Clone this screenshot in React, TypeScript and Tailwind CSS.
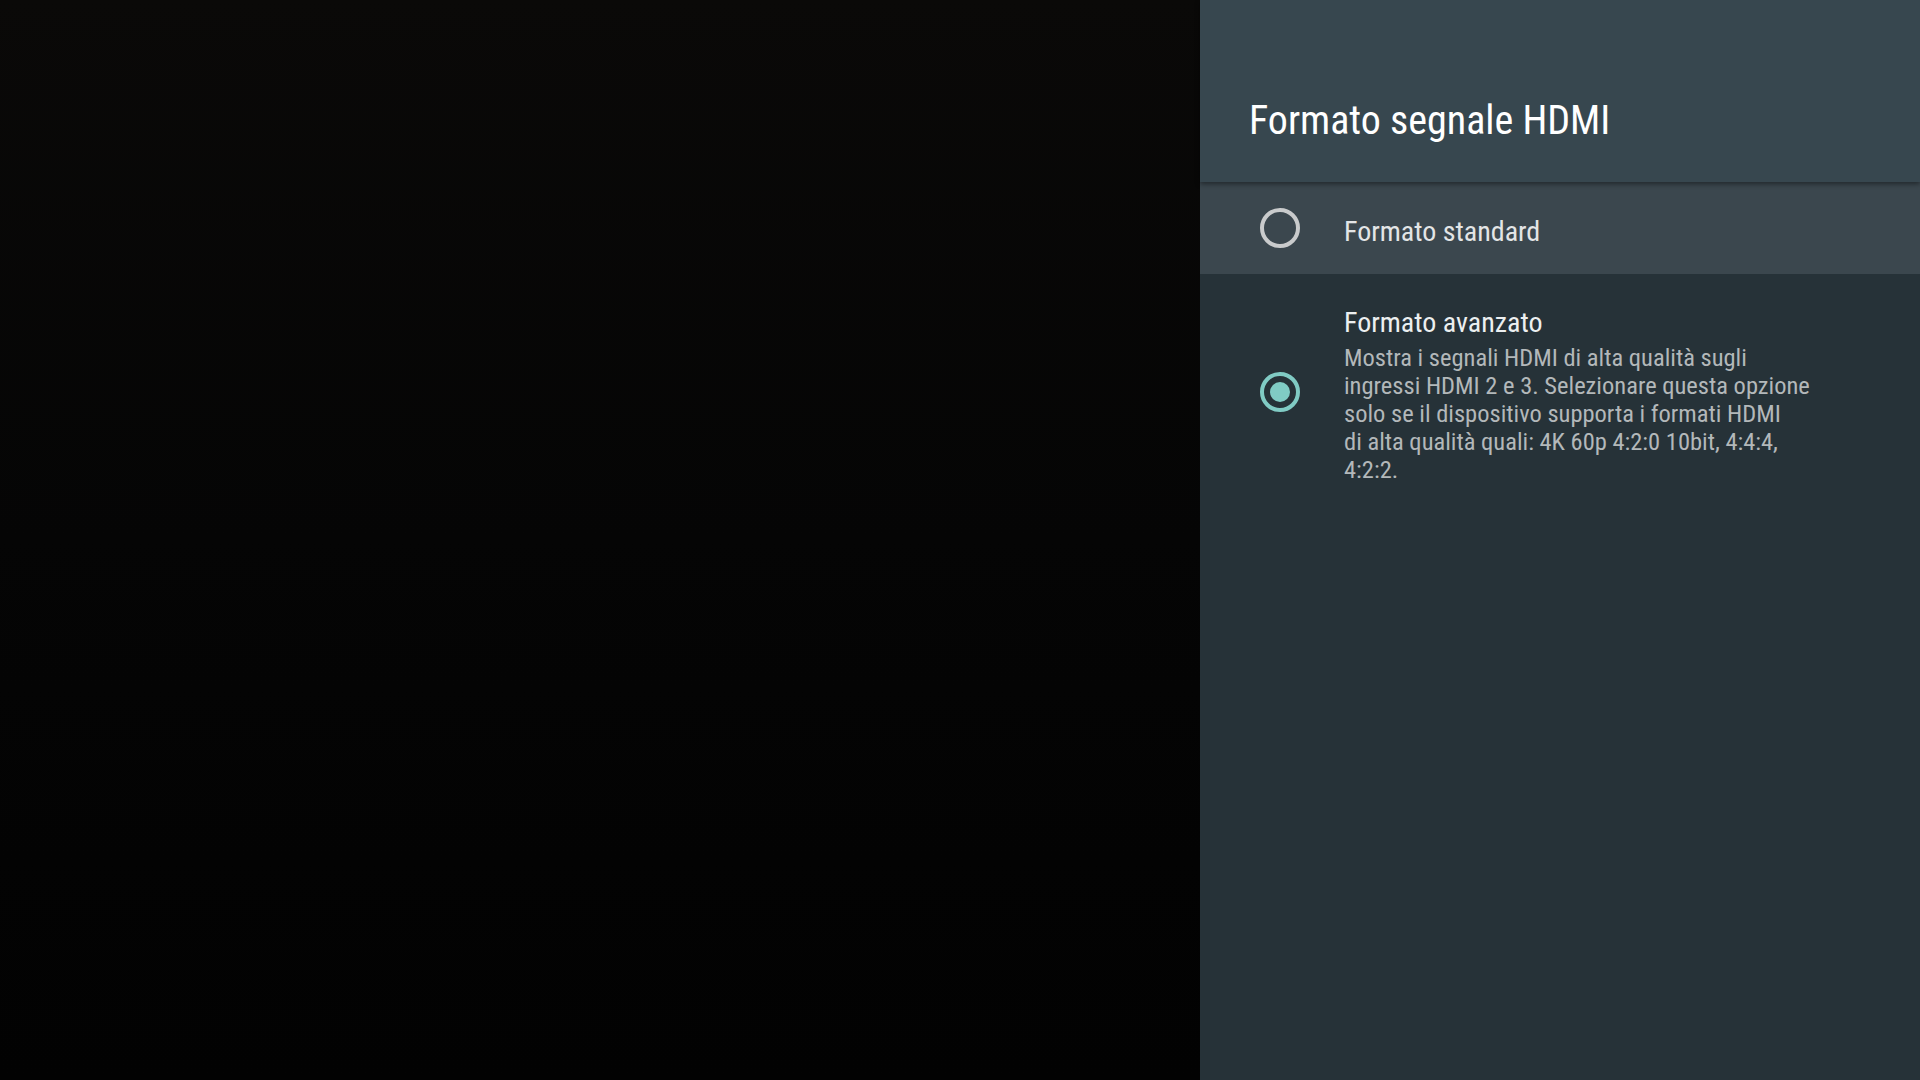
function Radio({ checked }: { checked: boolean }) {
  if (checked) {
    return (
      <div className="w-10 h-10 rounded-full border-4 border-[#80cbc4] flex items-center justify-center shrink-0">
        <div className="w-5 h-5 rounded-full bg-[#80cbc4]" />
      </div>
    );
  }
  return <div className="w-10 h-10 rounded-full border-4 border-[#c9cbcc] shrink-0" />;
}

export default function App() {
  return (
    <div className="flex w-full h-screen overflow-hidden font-['Roboto_Condensed',Roboto,sans-serif]">
      <div className="flex-1 bg-gradient-to-b from-[#0a0908] via-[#050505] to-[#020202]" />
      <div className="w-[720px] h-full bg-[#263238] flex flex-col">
        <div className="relative z-10 h-[182px] shrink-0 bg-[#37474f] shadow-[0_2px_5px_rgba(0,0,0,0.45)] pl-[49px] pt-[97px]">
          <h1 className="text-[40px] leading-[48px] text-white font-normal">Formato segnale HDMI</h1>
        </div>
        <div className="h-[92px] shrink-0 bg-[#3b474e] flex items-center pl-[60px]">
          <Radio checked={false} />
          <span className="ml-[44px] mt-[7px] text-[28px] leading-[34px] text-[#e3e5e6]">Formato standard</span>
        </div>
        <div className="flex items-start pl-[60px] pt-[32px]">
          <div className="mt-[66px]">
            <Radio checked={true} />
          </div>
          <div className="ml-[44px] flex flex-col">
            <span className="text-[28px] leading-[34px] text-[#eceff0]">Formato avanzato</span>
            <p className="mt-[4px] text-[24.5px] leading-[28px] text-[#b3b8ba] whitespace-nowrap">
              Mostra i segnali HDMI di alta qualità sugli
              <br />
              ingressi HDMI 2 e 3. Selezionare questa opzione
              <br />
              solo se il dispositivo supporta i formati HDMI
              <br />
              di alta qualità quali: 4K 60p 4:2:0 10bit, 4:4:4,
              <br />
              4:2:2.
            </p>
          </div>
        </div>
      </div>
    </div>
  );
}
